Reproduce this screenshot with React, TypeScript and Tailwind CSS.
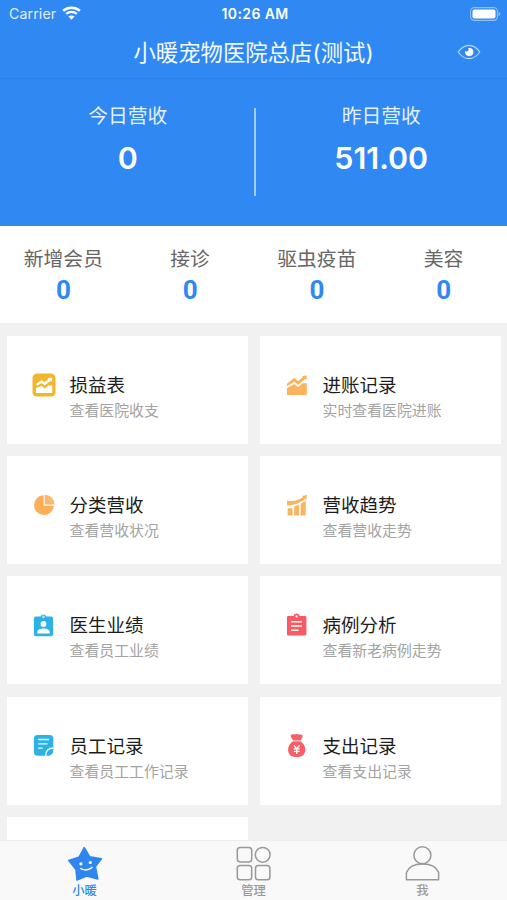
import type { ReactNode } from 'react';

type Stat = {
  label: string;
  value: string;
};

type MenuItem = {
  title: string;
  desc: string;
  icon: ReactNode;
};

function EyeIcon() {
  return (
    <svg width="24" height="18" viewBox="0 0 24 18" fill="none">
      <path d="M1.2 9C4.4 4.4 8 2.3 12 2.3S19.6 4.4 22.8 9C19.6 13.6 16 15.7 12 15.7S4.4 13.6 1.2 9Z" stroke="#b9d8fd" strokeWidth="1.2" />
      <circle cx="12.2" cy="9.1" r="4.1" fill="#fff" />
      <circle cx="9.6" cy="6.6" r="2" fill="#3088f2" />
    </svg>
  );
}

function WifiIcon() {
  return (
    <svg width="19" height="14" viewBox="0 0 19 14" fill="none" stroke="#fff">
      <path d="M1.1 4.8C5.8.6 13.2.6 17.9 4.8" strokeWidth="2.5" />
      <path d="M4.2 7.9C7.2 5.3 11.8 5.3 14.8 7.9" strokeWidth="2.3" />
      <path d="M9.5 13.8L6.4 10.6C8.2 9 10.8 9 12.6 10.6Z" fill="#fff" stroke="none" />
    </svg>
  );
}

function BatteryIcon() {
  return (
    <svg width="31" height="14" viewBox="0 0 31 14">
      <rect x=".6" y=".6" width="26.8" height="12.8" rx="3.8" fill="none" stroke="#8fbff9" strokeWidth="1.1" />
      <rect x="2.5" y="2.4" width="23" height="9.2" rx="2" fill="#fff" />
      <path d="M28.6 4.8C30.8 5.6 30.8 8.4 28.6 9.2Z" fill="#8fbff9" />
    </svg>
  );
}

function ProfitIcon() {
  return (
    <svg width="24" height="24" viewBox="0 0 24 24">
      <rect x=".5" y=".6" width="23" height="23" rx="4.4" fill="#f3b62b" />
      <path d="M4.2 10.9L9.5 7.1L12.5 9.2L16.5 5.9L15.7 4.9L20.3 4.4L19.9 8.7L18.7 7.7L12.6 12.4L9.6 9.9L4.9 12.8Z" fill="#fff" />
      <path d="M3.9 15.3L9.5 12.7L12.7 15.5L16.4 12.4H20.2V20H3.9Z" fill="#fff" />
    </svg>
  );
}

function IncomeIcon() {
  return (
    <svg width="24" height="24" viewBox="0 0 24 24" fill="#fdb35c">
      <path d="M2 10.8L9.4 4.8L13.1 7.9L18 4L17 2.9L21.7 2.4L21.5 7L20 5.9L13.2 11.8L9.5 8.7L2 13.2Z" />
      <path d="M2 15L9.4 11L13.1 14.2L17.4 10.2H21.8V21.9H2Z" />
    </svg>
  );
}

function PieIcon() {
  return (
    <svg width="24" height="24" viewBox="0 0 24 24" fill="#fdae57">
      <path d="M11.6 2.2A9.9 9.9 0 1 0 21.8 12.7H11.6Z" />
      <path d="M12.7 1.7A9.7 9.7 0 0 1 22.4 11.6H12.7Z" opacity=".88" />
    </svg>
  );
}

function TrendIcon() {
  return (
    <svg width="24" height="24" viewBox="0 0 24 24" fill="#fdb35c">
      <path d="M2 7.8C8.5 8.6 13.4 7.5 18.1 4.1L17 3L21.8 2L21.4 6.8L20 5.7C14.5 10.6 8.7 12.4 2 12.4Z" />
      <path d="M2.6 15.2H7.5V22.4H2.6Z" />
      <path d="M9.2 13.4L14 11.8V22.4H9.2Z" />
      <path d="M15.7 10.7L20.7 7.9V22.4H15.7Z" />
    </svg>
  );
}

function DoctorIcon() {
  return (
    <svg width="24" height="24" viewBox="0 0 24 24">
      <path d="M3.8 3.4H8.6A3.1 3.1 0 0 1 14.4 3.4H19.2Q21.1 3.4 21.1 5.3V21.3Q21.1 23.2 19.2 23.2H3.8Q1.9 23.2 1.9 21.3V5.3Q1.9 3.4 3.8 3.4Z" fill="#2cb2e6" />
      <circle cx="11.5" cy="3.7" r="1.3" fill="#b9e6f7" />
      <circle cx="11.5" cy="10.9" r="2.9" fill="#fff" />
      <path d="M5.3 20.4V18.9C5.3 16.4 8.6 15.4 11.5 15.4S17.7 16.4 17.7 18.9V20.4Z" fill="#fff" />
    </svg>
  );
}

function CaseIcon() {
  return (
    <svg width="24" height="24" viewBox="0 0 24 24">
      <path d="M3.4 2.9H8.5A3.2 3.2 0 0 1 14.7 2.9H20Q21.4 2.9 21.4 4.3V21.2Q21.4 22.6 20 22.6H3.4Q2 22.6 2 21.2V4.3Q2 2.9 3.4 2.9Z" fill="#f95b65" />
      <circle cx="11.6" cy="3.4" r="1.1" fill="#fff" />
      <path d="M6.1 8.7H17M6.1 13H17M6.1 17.2H13.5" stroke="#fff" strokeWidth="1.6" />
    </svg>
  );
}

function NoteIcon() {
  return (
    <svg width="24" height="24" viewBox="0 0 24 24">
      <rect x="1.9" y="2" width="19.4" height="20.7" rx="3.6" fill="#2cb2e6" />
      <path d="M13.8 22.8C13.6 17.9 16.6 15 21.4 15" fill="none" stroke="#fff" strokeWidth="1.3" />
      <path d="M22 17.2V23.4H16C19 22.4 21 20.3 22 17.2Z" fill="#fff" />
      <path d="M6.1 6.5H17M6.1 10.9H15.6M6.1 15.2H10.7" stroke="#e8f7fd" strokeWidth="1.3" />
    </svg>
  );
}

function MoneyBagIcon() {
  return (
    <svg width="24" height="24" viewBox="0 0 24 24">
      <path d="M5.6 2.7C7.3.5 9 1.9 11.7 1.1C14.4 1.9 16.2.6 17.8 2.7C17.4 4.8 16.1 5.7 15.5 7.5H8C7.3 5.7 6 4.8 5.6 2.7Z" fill="#f56068" />
      <path d="M8.1 8.2H15.4C18.2 9.8 20.3 13 20.3 16.4C20.3 21.4 17.4 24 11.7 24S3.1 21.4 3.1 16.4C3.1 13 5.3 9.8 8.1 8.2Z" fill="#f56068" />
      <path d="M8.9 12.4L11.7 15.6L14.6 12.4M11.7 15.6V21M8.8 15.8H14.7M8.8 18.3H14.7" fill="none" stroke="#fff" strokeWidth="1.3" />
    </svg>
  );
}

function StarIcon() {
  return (
    <svg width="36" height="36" viewBox="0 0 36 36">
      <path
        d="M17.2 2.6L22.7 11.8L34.4 13.7L28.4 21.6L30.8 34L19.6 31L10 35L9 24.4L1.8 15.4L12.3 11.9Z"
        fill="#2f86ee"
        stroke="#2f86ee"
        strokeWidth="1.6"
        strokeLinejoin="round"
      />
      <circle cx="13.9" cy="18.8" r="1.6" fill="#fff" />
      <circle cx="23.3" cy="17.5" r="1.6" fill="#fff" />
      <path d="M13.8 23.6C17.6 25.6 21.8 25.2 25.2 22.4" fill="none" stroke="#fff" strokeWidth="1.4" strokeLinecap="round" />
    </svg>
  );
}

function GridIcon() {
  return (
    <svg width="36" height="36" viewBox="0 0 36 36" fill="none" stroke="#999" strokeWidth="1.5">
      <rect x="1.3" y="2.5" width="14.4" height="14.4" rx="2.8" />
      <circle cx="26.7" cy="9.8" r="7.4" />
      <rect x="1.3" y="20.4" width="14.4" height="14.4" rx="2.8" />
      <rect x="19.5" y="20.4" width="14.4" height="14.4" rx="2.8" />
    </svg>
  );
}

function UserIcon() {
  return (
    <svg width="36" height="36" viewBox="0 0 36 36" fill="none" stroke="#999" strokeWidth="1.5" strokeLinejoin="round">
      <circle cx="17.4" cy="10.2" r="8.5" />
      <path d="M1.4 34.7V27.6C3.6 21.8 10 19 17.4 19S31.6 21.8 33.6 27.6V34.7Z" />
    </svg>
  );
}

const revenue: Stat[] = [
  { label: '今日营收', value: '0' },
  { label: '昨日营收', value: '511.00' },
];

const stats: Stat[] = [
  { label: '新增会员', value: '0' },
  { label: '接诊', value: '0' },
  { label: '驱虫疫苗', value: '0' },
  { label: '美容', value: '0' },
];

const menu: MenuItem[] = [
  { title: '损益表', desc: '查看医院收支', icon: <ProfitIcon /> },
  { title: '进账记录', desc: '实时查看医院进账', icon: <IncomeIcon /> },
  { title: '分类营收', desc: '查看营收状况', icon: <PieIcon /> },
  { title: '营收趋势', desc: '查看营收走势', icon: <TrendIcon /> },
  { title: '医生业绩', desc: '查看员工业绩', icon: <DoctorIcon /> },
  { title: '病例分析', desc: '查看新老病例走势', icon: <CaseIcon /> },
  { title: '员工记录', desc: '查看员工工作记录', icon: <NoteIcon /> },
  { title: '支出记录', desc: '查看支出记录', icon: <MoneyBagIcon /> },
];

const tabs = [
  { label: '小暖', icon: <StarIcon />, active: true },
  { label: '管理', icon: <GridIcon />, active: false },
  { label: '我', icon: <UserIcon />, active: false },
];

function StatusBar() {
  return (
    <div className="grid h-[27px] grid-cols-3 items-center pr-[6px] pl-[9px] text-sm leading-none">
      <div className="flex items-center gap-[6px] text-[#e3effe]">
        <span className="pt-[2px] text-[14.2px] tracking-[0.1px]">Carrier</span>
        <WifiIcon />
      </div>
      <div className="pt-px text-center text-[14px] font-semibold tracking-[0.4px] text-white">10:26 AM</div>
      <div className="flex justify-end">
        <BatteryIcon />
      </div>
    </div>
  );
}

function MenuCard({ item }: { item: MenuItem }) {
  return (
    <div className="flex bg-white pt-[37px] pl-[25px]">
      <div className="-mt-[0.5px] h-6 w-6 shrink-0">{item.icon}</div>
      <div className="ml-[13.5px] whitespace-nowrap">
        <p className="h-[25px] text-[18.5px] leading-[25px] text-[#1c1c1c]">{item.title}</p>
        <p className="text-[14.9px] leading-[27px] text-[#a3a3a3]">{item.desc}</p>
      </div>
    </div>
  );
}

export default function App() {
  return (
    <div className="flex h-[900px] w-[507px] flex-col overflow-hidden bg-[#f1f1f1] font-['Inter','Noto_Sans_CJK_SC',sans-serif]">
      <header className="h-[225.5px] shrink-0 bg-[#3088f2]">
        <StatusBar />
        <div className="grid h-[52px] grid-cols-[76px_1fr_76px] items-center border-b border-[#2b80e6]">
          <span />
          <h1 className="pt-[2px] text-center text-[22.4px] leading-none text-[#f4f9ff]">小暖宠物医院总店(测试)</h1>
          <div className="flex justify-center pb-[2px]">
            <EyeIcon />
          </div>
        </div>
        <div className="flex pt-[22px]">
          {revenue.map((item, index) => (
            <div key={item.label} className={index > 0 ? 'order-3 flex-1 text-center' : 'order-1 flex-1 pl-[2px] text-center'}>
              <p className="text-[19.8px] leading-[30px] text-[#e6f1fe]">{item.label}</p>
              <p className="mt-[9px] text-[30.4px] leading-[36px] font-semibold text-white">{item.value}</p>
            </div>
          ))}
          <span className="order-2 mt-[7px] h-[88px] w-[2px] bg-[#a5cdfb]" />
        </div>
      </header>

      <section className="grid h-[97.5px] shrink-0 grid-cols-4 bg-white pt-[18px]">
        {stats.map((item) => (
          <div key={item.label} className="text-center">
            <p className="text-[19.8px] leading-[30px] text-[#666]">{item.label}</p>
            <p className="font-['Roboto','Inter',sans-serif] text-[26px] leading-[32px] font-bold text-[#3088f2]">{item.value}</p>
          </div>
        ))}
      </section>

      <main className="min-h-0 flex-1 overflow-hidden pt-[13px] pr-[6px] pl-[7px]">
        <div className="grid auto-rows-[108px] grid-cols-2 gap-x-[12px] gap-y-[12.2px]">
          {menu.map((item) => (
            <MenuCard key={item.title} item={item} />
          ))}
          <div className="bg-white" />
        </div>
      </main>

      <nav className="grid h-[60px] shrink-0 grid-cols-3 border-t border-[#ececec] bg-[#f9f9f9]">
        {tabs.map((tab) => (
          <div key={tab.label} className="flex flex-col items-center pt-[4px]">
            {tab.icon}
            <span className={tab.active ? 'pt-px text-[12.3px] leading-[18px] font-medium text-[#3088f2]' : 'pt-px text-[12.3px] leading-[18px] font-medium text-[#999]'}>
              {tab.label}
            </span>
          </div>
        ))}
      </nav>
    </div>
  );
}
